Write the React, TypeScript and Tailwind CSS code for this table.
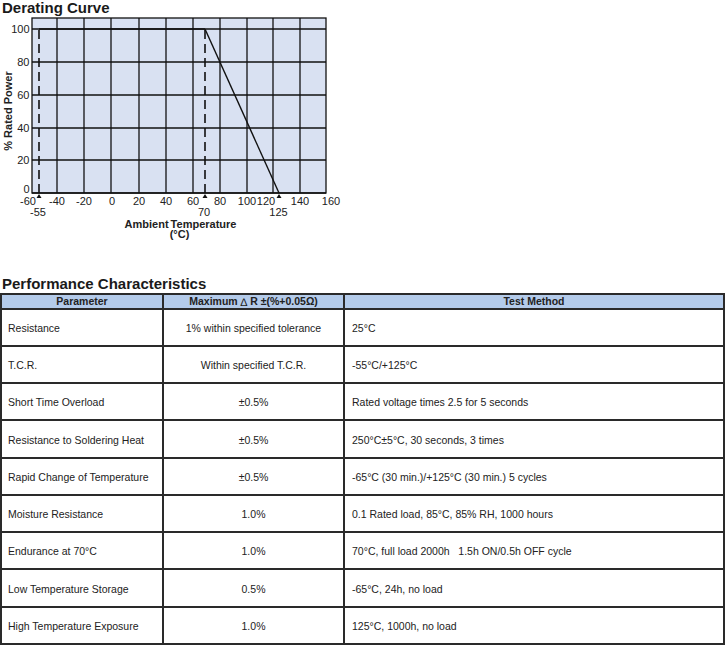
import React from "react";

const gridX = [32, 57, 84, 111, 139, 166, 193, 220, 247, 273, 300, 326];
const gridY = [29, 62, 95, 128, 160, 193];
const xLabels: [string, number][] = [
  ["-60", 28], ["-40", 57], ["-20", 84], ["0", 112], ["20", 139], ["40", 166],
  ["60", 193], ["80", 220], ["100", 247], ["120", 266], ["140", 300], ["160", 331],
];
const yLabels: [string, number][] = [
  ["100", 33], ["80", 66], ["60", 99], ["40", 132], ["20", 164], ["0", 193],
];

function Chart() {
  const font = "'Liberation Sans', Arial, sans-serif";
  return (
    <svg width={345} height={230} viewBox="0 15 345 230" className="block">
      <rect x={32} y={18} width={294} height={175} fill="#d9e1f2" stroke="#111" strokeWidth={1.3} />
      {gridX.slice(1, -1).map((x) => (
        <line key={"gx" + x} x1={x} y1={18} x2={x} y2={193} stroke="#111" strokeWidth={1.3} />
      ))}
      {gridY.map((y) => (
        <line key={"gy" + y} x1={32} y1={y} x2={326} y2={y} stroke="#111" strokeWidth={1.3} />
      ))}
      <line x1={39} y1={30} x2={39} y2={193} stroke="#111" strokeWidth={1.6} strokeDasharray="9 5" />
      <line x1={205} y1={30} x2={205} y2={193} stroke="#111" strokeWidth={1.6} strokeDasharray="9 5" />
      <line x1={39} y1={29} x2={205} y2={29} stroke="#111" strokeWidth={1.5} />
      <line x1={205} y1={29} x2={279} y2={193} stroke="#111" strokeWidth={1.4} />
      {[39, 205, 279].map((x) => (
        <polygon key={"t" + x} points={`${x - 2.5},198 ${x + 2.5},198 ${x},194`} fill="#111" />
      ))}
      <g fontFamily={font} fontSize={11} fill="#222">
        {yLabels.map(([t, y]) => (
          <text key={"yl" + t} x={29.5} y={y} textAnchor="end">{t}</text>
        ))}
        {xLabels.map(([t, x]) => (
          <text key={"xl" + t} x={x} y={204.5} textAnchor="middle">{t}</text>
        ))}
        <text x={38} y={215.5} textAnchor="middle">-55</text>
        <text x={204} y={215.5} textAnchor="middle">70</text>
        <text x={278.5} y={215.5} textAnchor="middle">125</text>
        <text x={180.5} y={227.5} textAnchor="middle" fontWeight="bold" wordSpacing={-1}>Ambient Temperature</text>
        <text x={179.5} y={238} textAnchor="middle" fontWeight="bold">(°C)</text>
        <text transform="translate(12,111) rotate(-90)" textAnchor="middle" fontWeight="bold">% Rated Power</text>
      </g>
    </svg>
  );
}

const rows: [string, string, string, number][] = [
  ["Resistance", "1% within specified tolerance", "25°C", 37],
  ["T.C.R.", "Within specified T.C.R.", "-55°C/+125°C", 37],
  ["Short Time Overload", "±0.5%", "Rated voltage times 2.5 for 5 seconds", 37],
  ["Resistance to Soldering Heat", "±0.5%", "250°C±5°C, 30 seconds, 3 times", 38],
  ["Rapid Change of Temperature", "±0.5%", "-65°C (30 min.)/+125°C (30 min.) 5 cycles", 37],
  ["Moisture Resistance", "1.0%", "0.1 Rated load, 85°C, 85% RH, 1000 hours", 37],
  ["Endurance at 70°C", "1.0%", "70°C, full load 2000h   1.5h ON/0.5h OFF cycle", 37],
  ["Low Temperature Storage", "0.5%", "-65°C, 24h, no load", 38],
  ["High Temperature Exposure", "1.0%", "125°C, 1000h, no load", 37],
];

export default function App() {
  return (
    <div className="w-[726px] h-[646px] bg-white overflow-hidden text-[#222]" style={{ fontFamily: "'Liberation Sans', Arial, sans-serif" }}>
      <div className="h-[15px] leading-[15px] text-[15px] font-bold pl-[2px] text-[#1a1a1a]">Derating Curve</div>
      <Chart />
      <div className="mt-[30px] h-[17px] leading-[17px] text-[15px] font-bold pl-[2px] text-[#1a1a1a]">Performance Characteristics</div>
      <div className="mt-[1px] w-[725px] border-l-2 border-t-2 border-[#2a2a2a]">
        <div className="grid grid-cols-[162px_181px_380px] bg-[#b4cbea] text-[10.5px] font-bold">
          <div className="h-[15px] pt-[1px] border-r-2 border-b-2 border-[#2a2a2a] flex items-center justify-center">Parameter</div>
          <div className="h-[15px] pt-[1px] border-r-2 border-b-2 border-[#2a2a2a] flex items-center justify-center whitespace-pre">
            Maximum <span className="font-normal text-[11px]">∆</span> R ±(%+0.05Ω)
          </div>
          <div className="h-[15px] pt-[1px] border-r-2 border-b-2 border-[#2a2a2a] flex items-center justify-center">Test Method</div>
        </div>
        {rows.map(([a, b, c, h]) => (
          <div key={a} className="grid grid-cols-[162px_181px_380px] text-[10.5px]" style={{ height: h }}>
            <div className="border-r-2 border-b-2 border-[#2a2a2a] flex items-center pl-[6px] pt-[3px]">{a}</div>
            <div className="border-r-2 border-b-2 border-[#2a2a2a] flex items-center justify-center pt-[3px]">{b}</div>
            <div className="border-r-2 border-b-2 border-[#2a2a2a] flex items-center pl-[7px] pt-[3px] whitespace-pre">{c}</div>
          </div>
        ))}
      </div>
    </div>
  );
}
